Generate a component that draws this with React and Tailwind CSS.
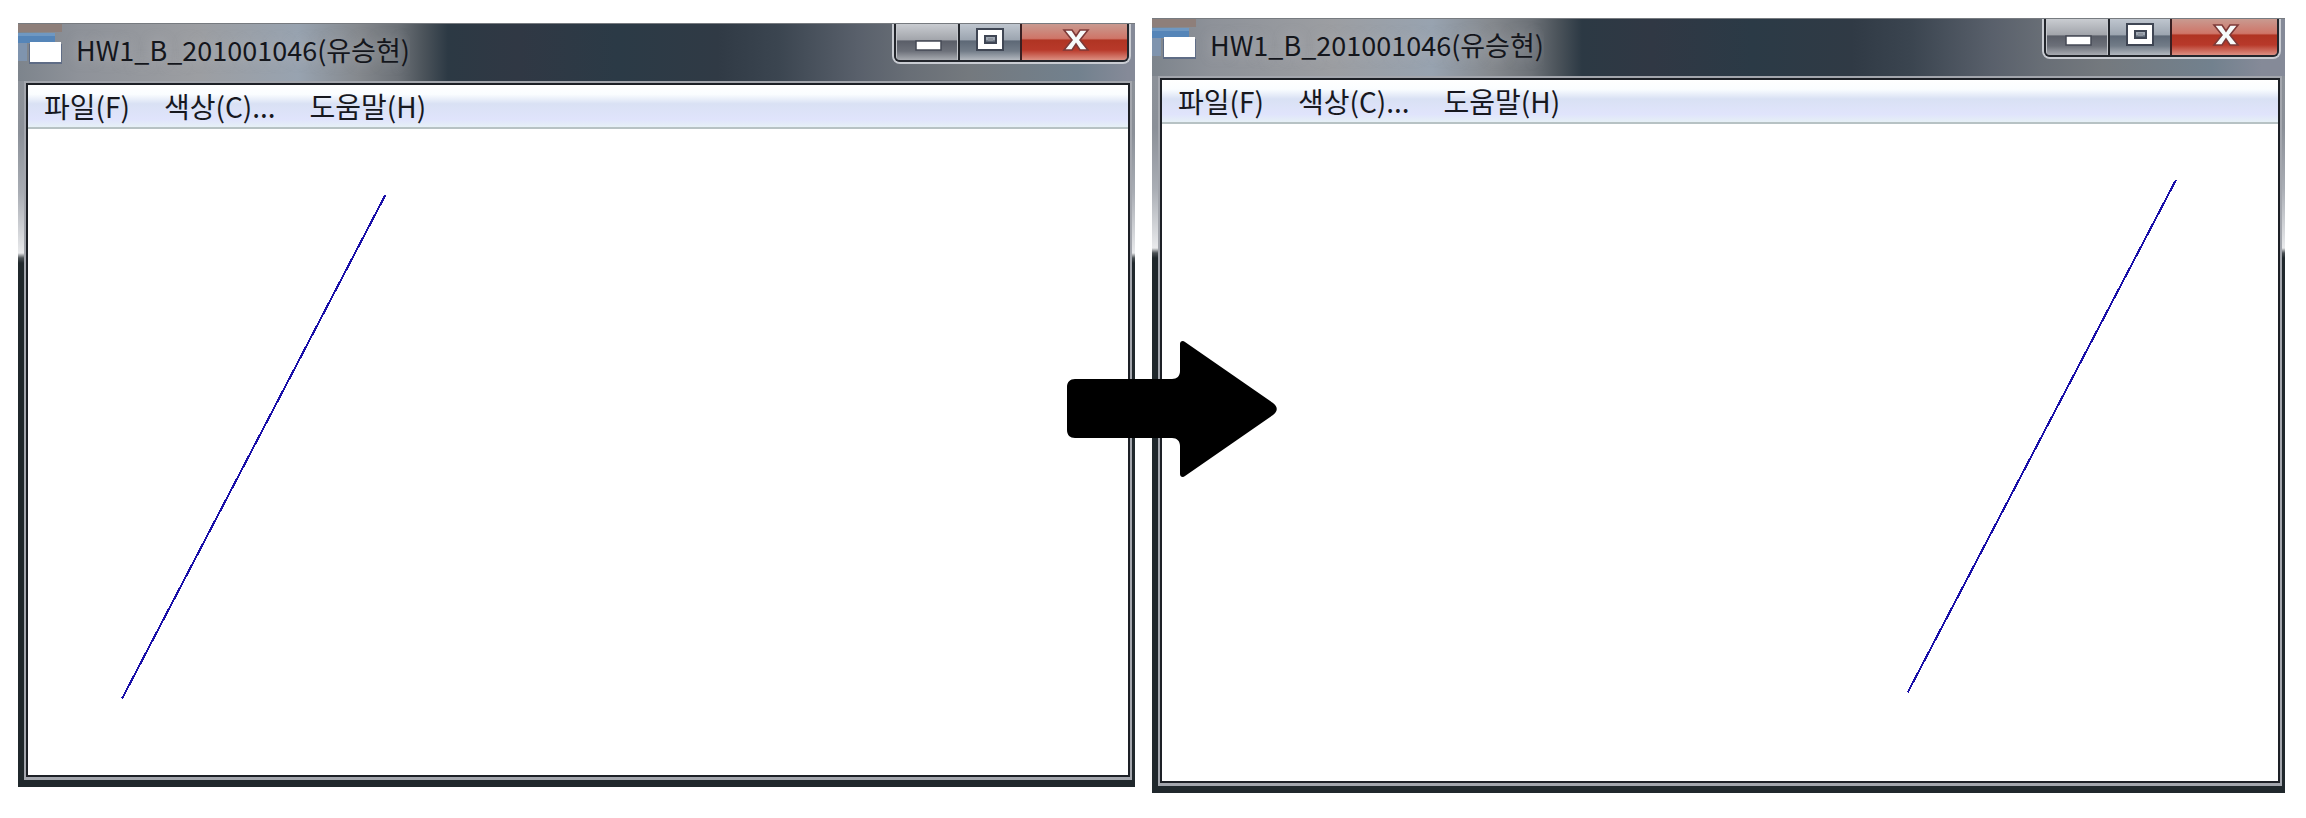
const MENUS = ["파일(F)", "색상(C)...", "도움말(H)"];

function AppIcon() {
  return (
    <svg viewBox="0 0 44 34" className="h-[34px] w-[44px] shrink-0" aria-hidden="true">
      <rect x="0" y="1" width="37" height="10" fill="#5585b8" />
      <rect x="0" y="1" width="37" height="3" fill="#6f98c2" />
      <rect x="0" y="11" width="9" height="18" fill="#7f94ae" />
      <rect x="11" y="12" width="33" height="20" fill="#4f5f80" opacity="0.7" />
      <rect x="12" y="10" width="31" height="20" fill="#ffffff" />
    </svg>
  );
}

function CaptionButtons() {
  return (
    <div className="flex h-[40px] rounded-b-lg border-x-2 border-b-2 border-[#c9ccd2]">
      <div className="flex overflow-hidden rounded-b-md border-x-2 border-b-2 border-[#23262c]">
        <button
          type="button"
          aria-label="최소화"
          className="w-[62px] border-x border-[#c4c7cc] bg-[linear-gradient(to_bottom,#c9ccd1_0%,#a2a5ab_44%,#5a5e68_47%,#6c7079_75%,#a8abb1_100%)]"
        >
          <svg viewBox="0 0 60 36" className="h-[36px] w-full" aria-hidden="true">
            <rect x="19" y="17" width="25" height="9" fill="#ffffff" stroke="#454a55" strokeWidth="1.5" />
          </svg>
        </button>
        <button
          type="button"
          aria-label="최대화"
          className="w-[62px] border-l-2 border-[#23262c] bg-[linear-gradient(to_bottom,#bfc6cf_0%,#9ca5b0_44%,#5d6876_47%,#727c88_75%,#b3b8bf_100%)]"
        >
          <svg viewBox="0 0 60 36" className="h-[36px] w-full" aria-hidden="true">
            <path d="M17 5h26v21H17zM25 12v7h11v-7z" fill="#ffffff" fillRule="evenodd" stroke="#3f4654" strokeWidth="2" />
            <rect x="28" y="14" width="5" height="3" fill="#8d939d" />
          </svg>
        </button>
        <button
          type="button"
          aria-label="닫기"
          className="w-[107px] border-l-2 border-[#3a2022] bg-[linear-gradient(to_bottom,#c99a90_0%,#cf7568_40%,#b03423_45%,#b8392a_72%,#dc8f82_100%)]"
        >
          <svg viewBox="0 0 105 36" className="h-[36px] w-full" aria-hidden="true">
            <path
              d="M42 6h8l4 6 4-6h8l-8 10 8 10h-8l-4-6-4 6h-8l8-10z"
              fill="#f6fafa"
              stroke="#7d3a38"
              strokeWidth="1.6"
            />
          </svg>
        </button>
      </div>
    </div>
  );
}

function Window({ className, children }) {
  return (
    <section
      className={
        "flex min-w-0 flex-col bg-[linear-gradient(to_bottom,#8d9299_0px,#8b9098_110px,#a9adb4_170px,#e9eaec_230px,#4a5054_235px,#20282c_240px)] " +
        className
      }
    >
      <header className="flex h-[58px] items-start border-t border-[#777b80] bg-[linear-gradient(to_right,#7d848c_0px,#8e9299_60px,#9c9ea2_180px,#98a3b0_280px,#85898e_340px,#6c7177_380px,#4c545b_405px,#2c3944_430px,#303844_500px,#2b3a46_600px,#303a45_700px,#3b4550_760px,#59606b_840px,#686e76_890px,#74797e_950px,#72818e_1060px,#858a98_1110px)]">
        <div className="flex min-w-0 flex-1 items-start">
          <div className="border-t-8 border-[#8e7f7a]">
            <AppIcon />
          </div>
          <h1 className="h-[52px] truncate pl-[14px] text-[27px] leading-[52px] text-[#14161c] [text-shadow:0_0_12px_rgba(190,192,196,0.6)]">
            HW1_B_201001046(유승현)
          </h1>
        </div>
        <div className="shrink-0 pr-1">
          <CaptionButtons />
        </div>
      </header>
      <div className="pr-[3px] pb-[7px] pl-[6px]">
        <div className="bg-[#a3a6ad] p-[2px] pb-[3px]">
          <div className="border-2 border-[#1d2026] bg-white">
            <nav className="flex h-[44px] gap-[34px] border-b-2 border-[#b7c2c4] bg-[linear-gradient(to_bottom,#ffffff_0%,#fafdff_22%,#d9e1f4_45%,#e0e4fc_82%,#e6f0f6_100%)] pl-4">
              {MENUS.map((m) => (
                <button key={m} type="button" className="text-[28px] leading-[42px] whitespace-nowrap text-[#17181f]">
                  {m}
                </button>
              ))}
            </nav>
            {children}
          </div>
        </div>
      </div>
    </section>
  );
}

export default function App() {
  return (
    <main
      className="relative flex items-start bg-white pt-[18px] pr-[21px] pb-6 pl-[18px]"
      style={{ fontFamily: '"Noto Sans CJK KR", sans-serif' }}
    >
      <Window className="mt-[5px] flex-[1117_1_0%]">
        <svg viewBox="0 0 1099 645" className="block w-full" role="img" aria-label="선">
          <line x1="357" y1="66" x2="94" y2="569" stroke="#1a10a8" strokeWidth="2" shapeRendering="crispEdges" />
        </svg>
      </Window>
      <div className="w-[17px] shrink-0" />
      <Window className="flex-[1133_1_0%]">
        <svg viewBox="0 0 1115 656" className="block w-full" role="img" aria-label="이동한 선">
          <line x1="1013" y1="56" x2="745" y2="568" stroke="#1a10a8" strokeWidth="2" shapeRendering="crispEdges" />
        </svg>
      </Window>
      <svg viewBox="0 0 212 138" className="absolute top-[340px] left-[1066px] h-[138px] w-[212px]" aria-hidden="true">
        <path
          d="M9 39H106C111 39 114 36 114 31V4C114 1 117 0 119 2L207 63C212 67 212 71 207 75L119 136C117 138 114 137 114 134V106C114 101 111 98 106 98H9C4 98 1 95 1 90V47C1 42 4 39 9 39Z"
          fill="#000000"
        />
      </svg>
    </main>
  );
}
